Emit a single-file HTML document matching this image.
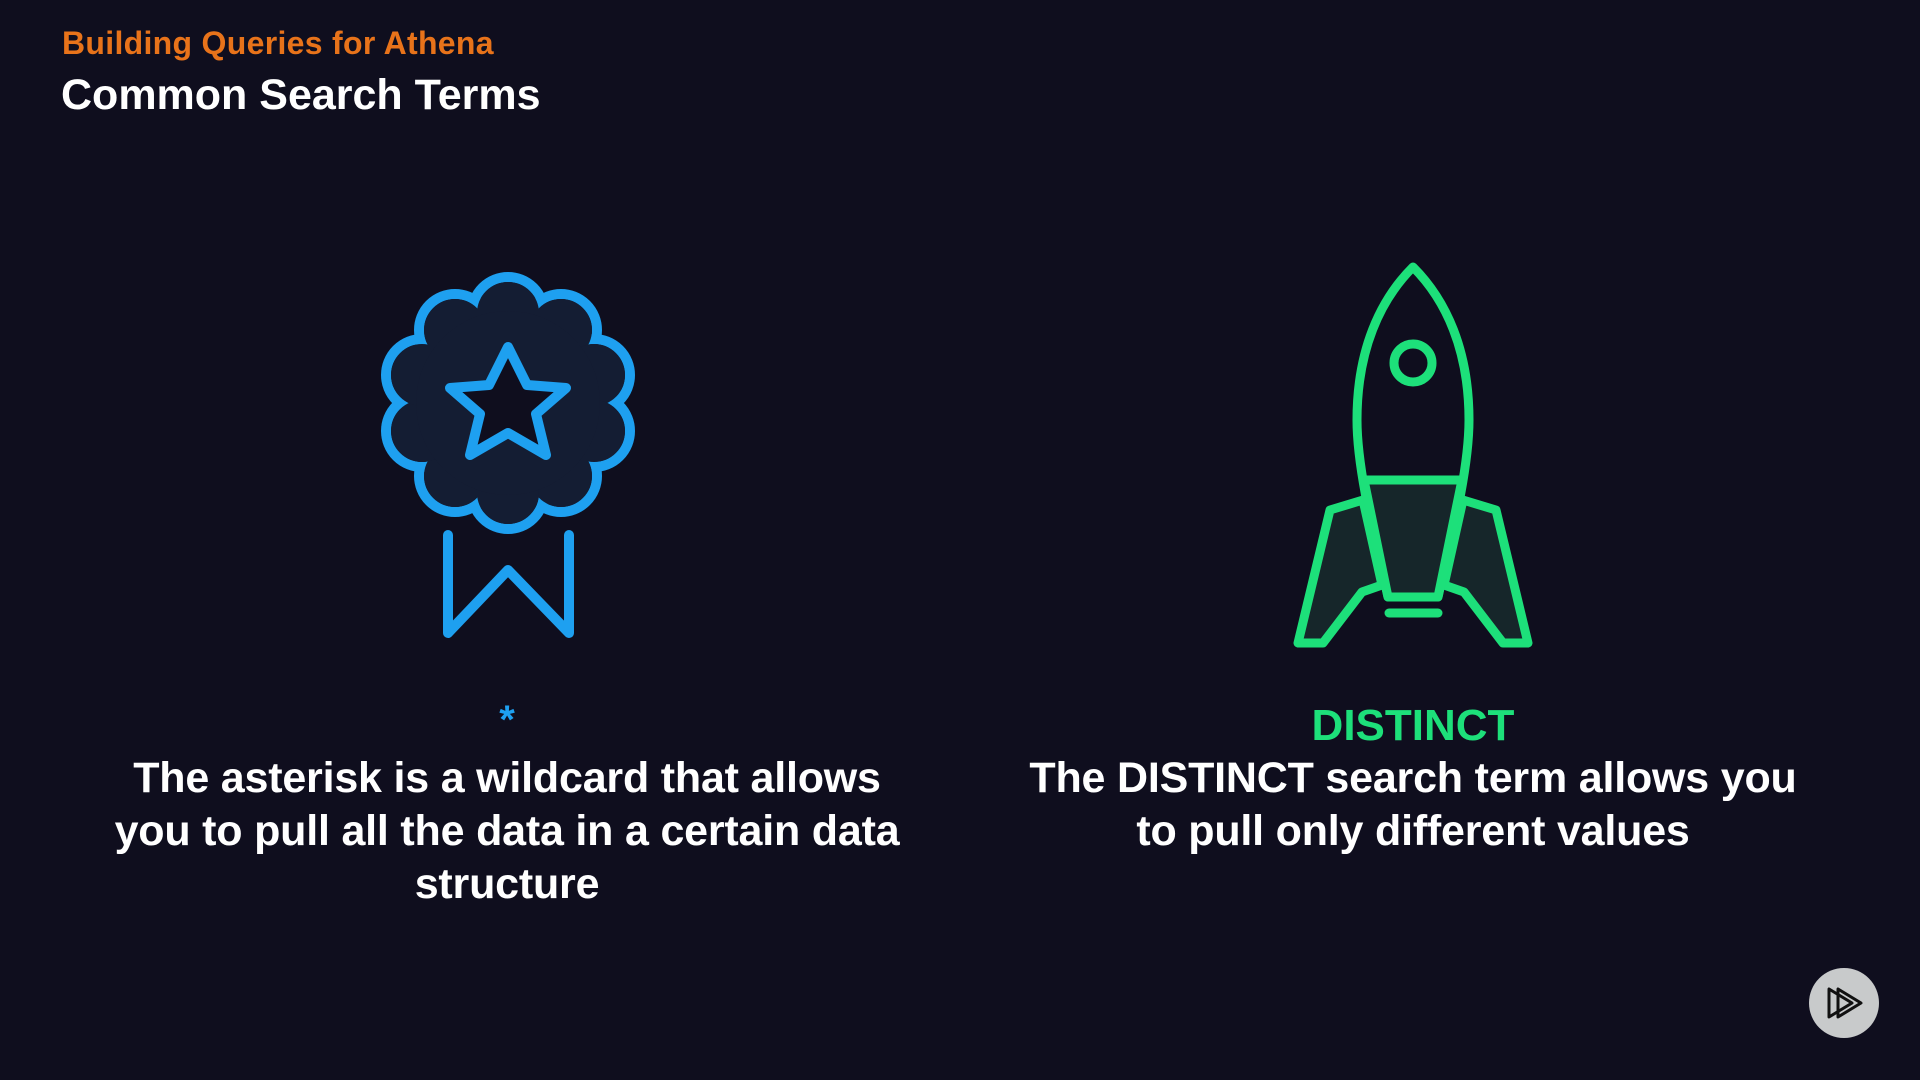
<!DOCTYPE html>
<html><head><meta charset="utf-8"><style>
html,body{margin:0;padding:0}
body{width:1920px;height:1080px;background:#0f0e1e;position:relative;overflow:hidden;font-family:"Liberation Sans",sans-serif;font-weight:bold}
.t{position:absolute;white-space:nowrap}
#sub{left:62px;top:25px;font-size:32px;color:#e8731a;letter-spacing:0.3px}
#title{left:61px;top:71px;font-size:43px;color:#fff;letter-spacing:0px}
.body{position:absolute;width:1000px;text-align:center;color:#fff;font-size:43px;line-height:53px;letter-spacing:-0.2px}
#lt{left:7px;top:752px}
#rt{left:913px;top:752px}
#dist{position:absolute;left:1263px;width:300px;text-align:center;top:701px;font-size:44px;color:#1de07a;letter-spacing:0px}
#ast{position:absolute;left:487px;width:40px;text-align:center;top:698px;font-size:40px;color:#1ea0f0}
</style></head><body>
<div class="t" id="sub">Building Queries for Athena</div>
<div class="t" id="title">Common Search Terms</div>
<svg width="1920" height="1080" style="position:absolute;left:0;top:0">
<g stroke="#1ea0f0" stroke-width="10" fill="#141d33">
<circle cx="508" cy="313" r="36"/><circle cx="561" cy="330" r="36"/><circle cx="594" cy="375" r="36"/><circle cx="594" cy="431" r="36"/><circle cx="561" cy="476" r="36"/><circle cx="508" cy="493" r="36"/><circle cx="455" cy="476" r="36"/><circle cx="422" cy="431" r="36"/><circle cx="422" cy="375" r="36"/><circle cx="455" cy="330" r="36"/>
</g>
<g fill="#141d33">
<circle cx="508" cy="313" r="31"/><circle cx="561" cy="330" r="31"/><circle cx="594" cy="375" r="31"/><circle cx="594" cy="431" r="31"/><circle cx="561" cy="476" r="31"/><circle cx="508" cy="493" r="31"/><circle cx="455" cy="476" r="31"/><circle cx="422" cy="431" r="31"/><circle cx="422" cy="375" r="31"/><circle cx="455" cy="330" r="31"/>
<circle cx="508" cy="403" r="92"/>
</g>
<polygon points="508,347 527,385 566,388 536,414 546,455 508,433 470,455 480,414 450,388 489,385" fill="#0f0e1e" stroke="#1ea0f0" stroke-width="10" stroke-linejoin="round"/>
<polyline points="448,535 448,633 508,570 569,633 569,535" fill="none" stroke="#1ea0f0" stroke-width="10" stroke-linecap="round" stroke-linejoin="round"/>
<g stroke="#1de07a" stroke-width="9" stroke-linejoin="round" stroke-linecap="round">
<path d="M1363,500 L1330,510 L1298,643 L1323,643 L1362,592 L1382,585 Z" fill="#16262a"/>
<path d="M1463,500 L1496,510 L1528,643 L1503,643 L1464,592 L1444,585 Z" fill="#16262a"/>
<path d="M1413,267 C1380,300 1357,350 1357,420 C1357,470 1375,540 1388,597 L1438,597 C1451,540 1469,470 1469,420 C1469,350 1446,300 1413,267 Z" fill="#0f0e1e"/>
<path d="M1364,480 L1462,480 L1438,597 L1388,597 Z" fill="#16262a"/>
<circle cx="1413" cy="363" r="19" fill="none"/>
<line x1="1389" y1="613" x2="1438" y2="613"/>
</g>
<circle cx="1844" cy="1003" r="35" fill="#c8cacb"/>
<path d="M1829,989 L1829,1017 L1852,1003 Z M1838,989 L1838,1017 L1861,1003 Z" fill="none" stroke="#111" stroke-width="3" stroke-linejoin="round"/>
</svg>
<div id="ast">*</div>
<div id="dist">DISTINCT</div>
<div class="body" id="lt">The asterisk is a wildcard that allows<br>you to pull all the data in a certain data<br>structure</div>
<div class="body" id="rt">The DISTINCT search term allows you<br>to pull only different values</div>
</body></html>
